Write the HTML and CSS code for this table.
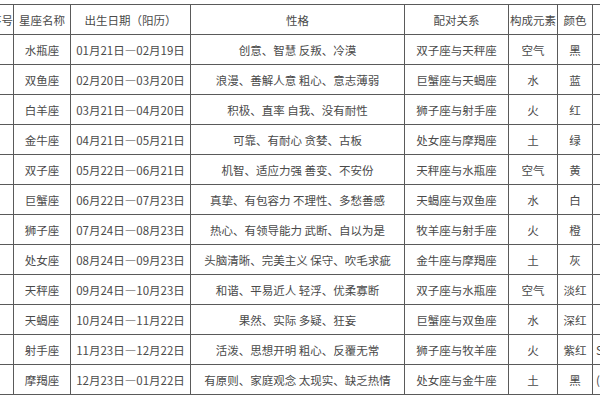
FILE: index.html
```html
<!DOCTYPE html>
<html lang="zh-CN">
<head>
<meta charset="utf-8">
<link rel="stylesheet" href="styles.css">
</head>
<body>
<div class="frame">
<table class="zodiac">
<colgroup>
<col class="c0"><col class="c1"><col class="c2"><col class="c3"><col class="c4"><col class="c5"><col class="c6"><col class="c7">
</colgroup>
<thead>
<tr><th class="idx">序号</th><th>星座名称</th><th>出生日期（阳历）</th><th>性格</th><th>配对关系</th><th>构成元素</th><th>颜色</th><th class="extra"></th></tr>
</thead>
<tbody>
<tr><td></td><td>水瓶座</td><td>01月21日—02月19日</td><td>创意、智慧 反叛、冷漠</td><td>双子座与天秤座</td><td>空气</td><td>黑</td><td class="extra"></td></tr>
<tr><td></td><td>双鱼座</td><td>02月20日—03月20日</td><td>浪漫、善解人意 粗心、意志薄弱</td><td>巨蟹座与天蝎座</td><td>水</td><td>蓝</td><td class="extra"></td></tr>
<tr><td></td><td>白羊座</td><td>03月21日—04月20日</td><td>积极、直率 自我、没有耐性</td><td>狮子座与射手座</td><td>火</td><td>红</td><td class="extra"></td></tr>
<tr><td></td><td>金牛座</td><td>04月21日—05月21日</td><td>可靠、有耐心 贪婪、古板</td><td>处女座与摩羯座</td><td>土</td><td>绿</td><td class="extra"></td></tr>
<tr><td></td><td>双子座</td><td>05月22日—06月21日</td><td>机智、适应力强 善变、不安份</td><td>天秤座与水瓶座</td><td>空气</td><td>黄</td><td class="extra"></td></tr>
<tr><td></td><td>巨蟹座</td><td>06月22日—07月23日</td><td>真挚、有包容力 不理性、多愁善感</td><td>天蝎座与双鱼座</td><td>水</td><td>白</td><td class="extra"></td></tr>
<tr><td></td><td>狮子座</td><td>07月24日—08月23日</td><td>热心、有领导能力 武断、自以为是</td><td>牧羊座与射手座</td><td>火</td><td>橙</td><td class="extra"></td></tr>
<tr><td></td><td>处女座</td><td>08月24日—09月23日</td><td>头脑清晰、完美主义 保守、吹毛求疵</td><td>金牛座与摩羯座</td><td>土</td><td>灰</td><td class="extra"></td></tr>
<tr><td></td><td>天秤座</td><td>09月24日—10月23日</td><td>和谐、平易近人 轻浮、优柔寡断</td><td>双子座与水瓶座</td><td>空气</td><td>淡红</td><td class="extra"></td></tr>
<tr><td></td><td>天蝎座</td><td>10月24日—11月22日</td><td>果然、实际 多疑、狂妄</td><td>巨蟹座与双鱼座</td><td>水</td><td>深红</td><td class="extra"></td></tr>
<tr><td></td><td>射手座</td><td>11月23日—12月22日</td><td>活泼、思想开明 粗心、反覆无常</td><td>狮子座与牧羊座</td><td>火</td><td>紫红</td><td class="extra">S</td></tr>
<tr><td></td><td>摩羯座</td><td>12月23日—01月22日</td><td>有原则、家庭观念 太现实、缺乏热情</td><td>处女座与金牛座</td><td>土</td><td>黑</td><td class="extra">(</td></tr>
</tbody>
</table>
</div>
</body>
</html>
```
FILE: styles.css
```css
html, body {
  margin: 0;
  padding: 0;
  background: #fff;
}
.frame {
  width: 600px;
  height: 400px;
  overflow: hidden;
  padding-top: 4px;
  box-sizing: border-box;
}
.zodiac {
  margin-left: -27px;
  border-collapse: collapse;
  table-layout: fixed;
  width: 700px;
  font-family: "Noto Sans CJK SC", "Noto Sans", sans-serif;
  font-size: 11.5px;
  color: #4a4a4a;
}
.c0 { width: 40px; }
.c1 { width: 57px; }
.c2 { width: 120px; }
.c3 { width: 214px; }
.c4 { width: 104px; }
.c5 { width: 49px; }
.c6 { width: 35px; }
.c7 { width: 81px; }
.zodiac th,
.zodiac td {
  border: 1px solid #5a5a5a;
  height: 29px;
  padding: 0;
  text-align: center;
  vertical-align: middle;
  font-weight: normal;
  white-space: nowrap;
  overflow: hidden;
}
.zodiac .idx {
  text-align: right;
}
.zodiac .extra {
  text-align: left;
  padding-left: 3px;
}
```
